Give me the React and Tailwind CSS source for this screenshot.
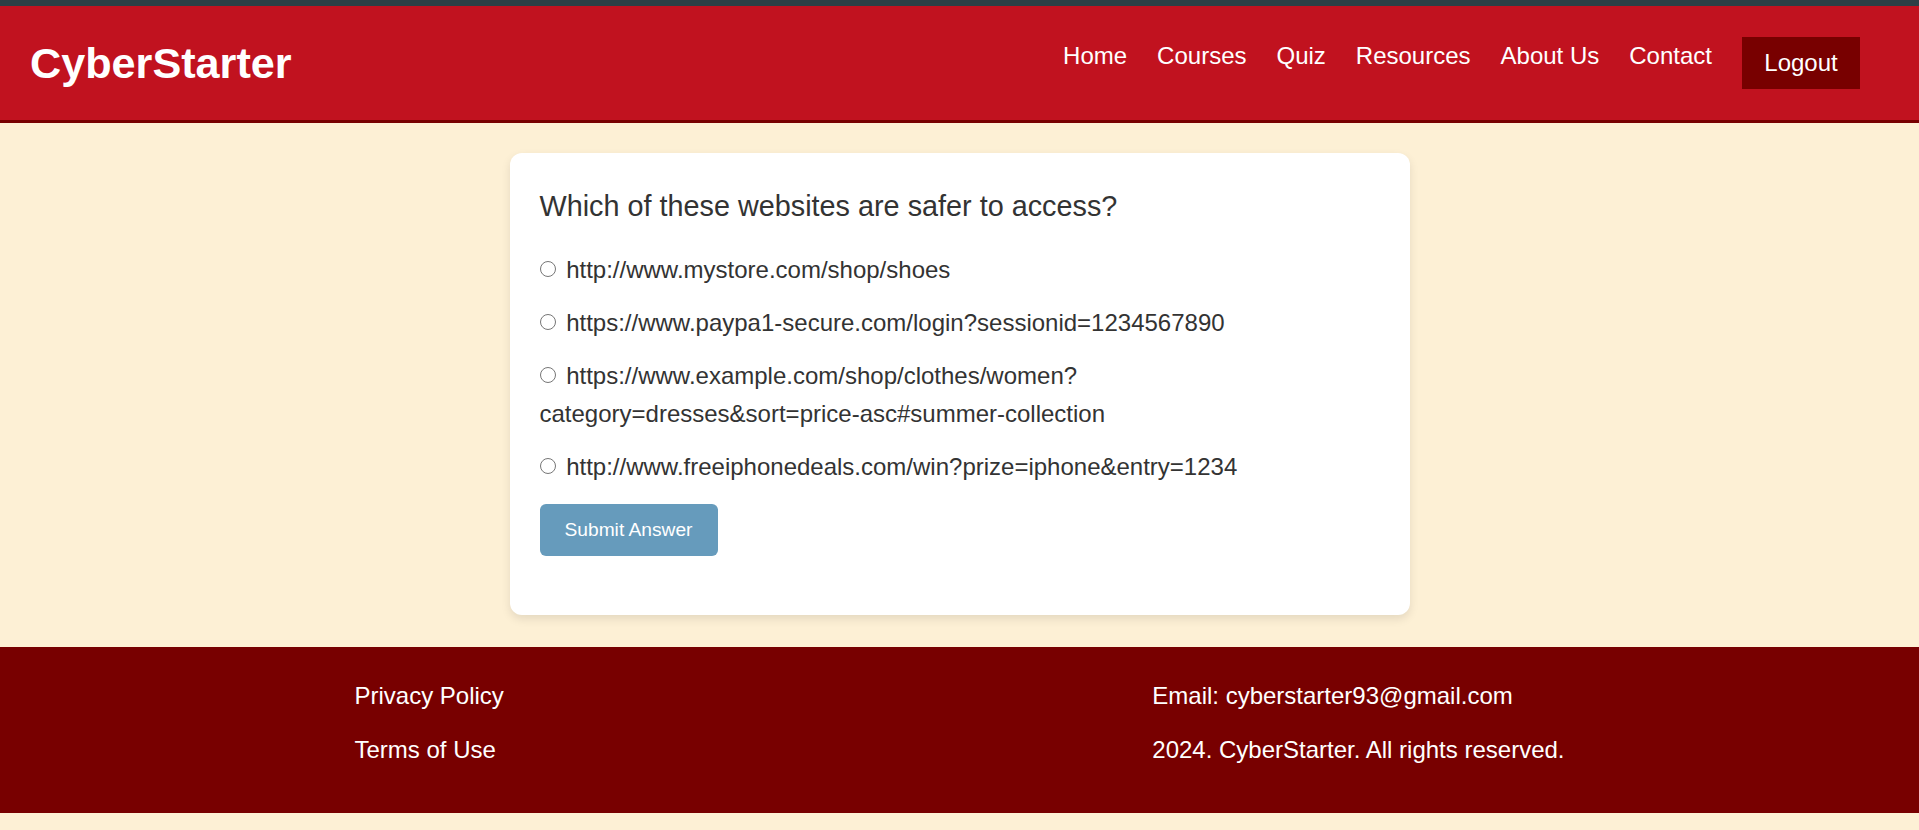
import React from 'react';

const navLinks = ['Home', 'Courses', 'Quiz', 'Resources', 'About Us', 'Contact'];

const options = [
    { id: 'a', label: 'http://www.mystore.com/shop/shoes' },
    { id: 'b', label: 'https://www.paypa1-secure.com/login?sessionid=1234567890' },
    { id: 'c', label: 'https://www.example.com/shop/clothes/women?', rest: 'category=dresses&sort=price-asc#summer-collection' },
    { id: 'd', label: 'http://www.freeiphonedeals.com/win?prize=iphone&entry=1234' },
];

export default function App() {
    return (
        <div className="min-h-screen bg-[#fdf0d5] font-['Liberation_Sans',Arial,sans-serif] text-[#333]">
            {/* Header */}
            <header className="h-[123px] bg-[#c1121f] border-t-[6px] border-t-[#2c3f45] border-b-[3px] border-b-[#780000] flex items-center justify-between pl-[30px] pr-[59px]">
                <h1 className="text-[43.2px] font-bold text-white leading-none pt-[2px]">CyberStarter</h1>
                <nav className="flex items-center gap-[30px]">
                    <ul className="flex items-center gap-[30px] pb-[13px]">
                        {navLinks.map((link) => (
                            <li key={link}>
                                <a href="#" className="text-[24px] text-white leading-[1.15]">{link}</a>
                            </li>
                        ))}
                    </ul>
                    <button className="w-[118px] h-[52px] bg-[#780000] text-white text-[24px] leading-none">
                        Logout
                    </button>
                </nav>
            </header>

            {/* Quiz card */}
            <main className="pt-[30px] pb-[32px]">
                <div className="w-[900px] mx-auto bg-white rounded-[12px] shadow-[0_4px_10px_rgba(0,0,0,0.1)] px-[30px] pt-[30px] pb-[59px]">
                    <h2 className="text-[28.8px] leading-[1.6] mb-[22px] text-[#333]">
                        Which of these websites are safer to access?
                    </h2>
                    <form onSubmit={(e) => e.preventDefault()}>
                        {options.map((opt) => (
                            <div key={opt.id} className="mb-[14.4px] text-[24px] leading-[1.6]">
                                <label>
                                    <input
                                        type="radio"
                                        name="answer"
                                        value={opt.id}
                                        className="w-[16px] h-[16px] m-0 mr-[4px] align-[1px]"
                                    />{' '}
                                    {opt.label}
                                    {opt.rest && (
                                        <>
                                            <wbr />
                                            {opt.rest}
                                        </>
                                    )}
                                </label>
                            </div>
                        ))}
                        <button
                            type="submit"
                            className="mt-[3.6px] w-[178px] h-[52px] bg-[#669bbc] text-white text-[19.2px] rounded-[6px]"
                        >
                            Submit Answer
                        </button>
                    </form>
                </div>
            </main>

            {/* Footer */}
            <footer className="bg-[#780000] text-white text-[24px] leading-[1.6] pt-[30px] pb-[44px]">
                <div className="w-[1210px] mx-auto flex justify-between">
                    <div className="flex flex-col gap-[15px]">
                        <a href="#">Privacy Policy</a>
                        <a href="#">Terms of Use</a>
                    </div>
                    <div className="flex flex-col gap-[15px]">
                        <p>Email: cyberstarter93@gmail.com</p>
                        <p>2024. CyberStarter. All rights reserved.</p>
                    </div>
                </div>
            </footer>
        </div>
    );
}
